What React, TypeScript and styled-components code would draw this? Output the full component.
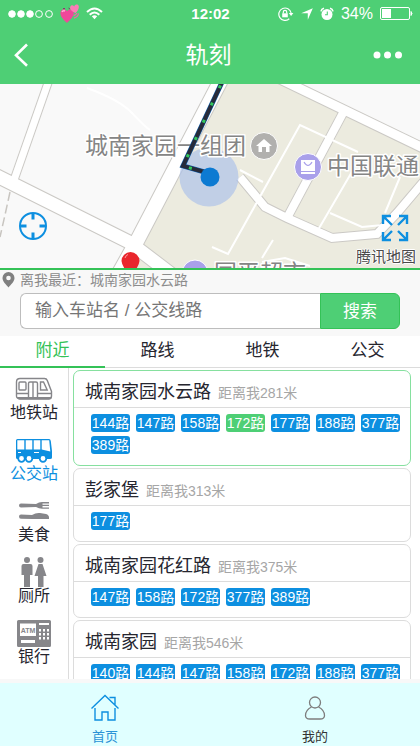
import React from "react";
import styled, { createGlobalStyle } from "styled-components";

const green = "#4ecf75";
const greenDeep = "#34c257";
const blue = "#0d8fe0";
const ink = "#26262f";
const line = "#dcdcdc";

const GlobalStyle = createGlobalStyle`
  * { box-sizing: border-box; }
  body { margin: 0; background: #fff; }
  body, button, input {
    font-family: "Liberation Sans", "Noto Sans CJK SC", sans-serif;
    color: ${ink};
  }
  button { border: 0; padding: 0; background: none; cursor: pointer; }
  a { color: inherit; text-decoration: none; }
  h1, h2, p, ul { margin: 0; padding: 0; font-weight: 400; }
  ul { list-style: none; }
  svg { display: block; flex: none; }
`;

const Shell = styled.div`
  display: flex;
  flex-direction: column;
  height: 100vh;
  overflow: hidden;
`;

const Top = styled.header`
  background: ${green};
  color: #fff;
`;

const StatusBar = styled.div`
  display: grid;
  grid-template-columns: 1fr auto 1fr;
  align-items: center;
  height: 27px;
  padding: 0 7px 0 8px;
`;

const StatusGroup = styled.div<{ $end?: boolean }>`
  display: flex;
  align-items: center;
  justify-content: ${(p) => (p.$end ? "flex-end" : "flex-start")};
  gap: ${(p) => (p.$end ? 7 : 6)}px;
  font-size: 16px;
`;

const Clock = styled.time`
  font-size: 15px;
  font-weight: 700;
`;

const TitleBar = styled.div`
  display: grid;
  grid-template-columns: 1fr auto 1fr;
  align-items: center;
  height: 57px;
  padding: 0 17px 2px 14px;
`;

const Title = styled.h1`
  font-size: 23px;
  line-height: 28px;
`;

const BarButton = styled.button<{ $end?: boolean }>`
  justify-self: ${(p) => (p.$end ? "end" : "start")};
`;

const MapPanel = styled.section`
  position: relative;
  flex: none;
  height: 186px;
  border-bottom: 2px solid ${greenDeep};
  overflow: hidden;
`;

const MapDrawing = styled.svg`
  width: 100%;
  height: 100%;
  font-size: 23px;
`;

const MapButton = styled.button<{ $right?: boolean }>`
  position: absolute;
  ${(p) => (p.$right ? "right: 11px; bottom: 26px;" : "left: 18px; bottom: 27px;")}
`;

const MapCredit = styled.span`
  position: absolute;
  right: 4px;
  bottom: 1px;
  font-size: 15px;
  line-height: 20px;
  color: #4a4a4a;
  text-shadow: 1px 0 #fff, -1px 0 #fff, 0 1px #fff, 0 -1px #fff;
`;

const SearchPanel = styled.section`
  flex: none;
  padding: 0 20px 7px;
  background: #f8f8f8;
`;

const Nearest = styled.p`
  display: flex;
  align-items: center;
  gap: 5px;
  height: 23px;
  margin-left: -18px;
  padding-bottom: 3px;
  font-size: 14px;
  line-height: 20px;
  color: #8c8c8c;
`;

const SearchForm = styled.form`
  display: flex;
  height: 36px;
`;

const SearchInput = styled.input`
  flex: 1;
  min-width: 0;
  padding: 0 14px;
  border: 1px solid #bdbdbd;
  border-right: 0;
  border-radius: 6px 0 0 6px;
  background: #fff;
  font-size: 17px;
  outline: none;
  &::placeholder { color: #757575; opacity: 1; }
`;

const SearchButton = styled.button`
  width: 80px;
  padding-bottom: 3px;
  border: 1px solid ${greenDeep};
  border-radius: 0 6px 6px 0;
  background: ${green};
  color: #fff;
  font-size: 17px;
`;

const Tabs = styled.nav`
  display: flex;
  flex: none;
  height: 32px;
  border-bottom: 1px solid ${line};
  background: #fff;
`;

const Tab = styled.button<{ $active?: boolean }>`
  flex: 1;
  height: 32px;
  font-size: 17px;
  line-height: 28px;
  color: ${(p) => (p.$active ? greenDeep : ink)};
  border-bottom: 2px solid ${(p) => (p.$active ? greenDeep : "transparent")};
`;

const Content = styled.main`
  display: flex;
  flex: 1;
  min-height: 0;
  border-bottom: 4px solid #f8f8f8;
`;

const Categories = styled.nav`
  flex: none;
  width: 69px;
  padding-top: 3px;
  border-right: 1px solid ${line};
  overflow: hidden;
`;

const Category = styled.button<{ $active?: boolean }>`
  display: flex;
  flex-direction: column;
  align-items: center;
  width: 100%;
  height: 61px;
  padding-top: 4px;
  color: ${(p) => (p.$active ? blue : "#86868a")};
`;

const CategoryIcon = styled.span`
  display: flex;
  align-items: center;
  height: 28px;
`;

const CategoryLabel = styled.span<{ $active?: boolean }>`
  font-size: 16px;
  line-height: 20px;
  color: ${(p) => (p.$active ? blue : ink)};
`;

const StationList = styled.ul`
  display: flex;
  flex: 1;
  flex-direction: column;
  gap: 2px;
  min-width: 0;
  padding: 2px 9px 0 4px;
  overflow: hidden;
`;

const Card = styled.li<{ $selected?: boolean }>`
  flex: none;
  border: 1px solid ${(p) => (p.$selected ? "#86e09f" : line)};
  border-radius: 7px;
  background: #fff;
`;

const CardHead = styled.div`
  display: flex;
  align-items: baseline;
  gap: 7px;
  height: 37px;
  padding: 0 11px;
  border-bottom: 1px solid ${line};
  line-height: 42px;
`;

const StationName = styled.h2`
  font-size: 18px;
  line-height: inherit;
`;

const Distance = styled.span`
  font-size: 14px;
  color: #a6a6a6;
`;

const Lines = styled.div`
  display: flex;
  flex-wrap: wrap;
  gap: 4px 6px;
  padding: 6px 8px 11px 17px;
`;

const LineChip = styled.button<{ $active?: boolean }>`
  display: flex;
  justify-content: center;
  flex: 0 0 39px;
  height: 18px;
  border-radius: 3px;
  background: ${(p) => (p.$active ? green : blue)};
  color: #fff;
  font-size: 14px;
  line-height: 18px;
  white-space: nowrap;
`;

const BottomNav = styled.nav`
  display: flex;
  flex: none;
  height: 63px;
  background: #e0ffff;
`;

const BottomLink = styled.a<{ $active?: boolean }>`
  display: flex;
  flex: 1;
  flex-direction: column;
  align-items: center;
  gap: 7px;
  padding-top: 11px;
  font-size: 13px;
  line-height: 18px;
  color: ${(p) => (p.$active ? "#2b93d6" : "#333")};
`;

const SignalIcon = () => (
  <svg width="46" height="10" viewBox="0 0 46 10" fill="#fff" stroke="#fff">
    {[4, 13, 22].map((x) => <circle key={x} cx={x} cy="5" r="3.3" />)}
    {[31, 41].map((x) => <circle key={x} cx={x} cy="5" r="3.4" fill="none" />)}
  </svg>
);

const HeartsIcon = () => (
  <svg width="20" height="20" viewBox="0 0 20 20">
    <path d="M7 19C4 16 0 13 .5 8.500C1 5 4.500 4 7 7C9.500 4 14 5.500 13.800 9C13.500 13 10 16 7 19Z" fill="#f0479a" />
    <path d="M2 8Q3 6 5 7" stroke="#ffb3d7" strokeWidth="1.500" fill="none" />
    <path d="M15.500 9C12 8 9.500 5.500 10.200 3C11 .8 13 1 14.200 2.400C15 .2 18.300-.2 18.800 2.200C19.200 4.500 17.500 7 15.500 9Z" fill="#fb7db6" />
    <path d="M14 14Q18 13 18.500 9.500M13.500 11.500Q16 11 17 9" stroke="#f264aa" strokeWidth="1.300" fill="none" />
    <path d="M3 4.500h2M8.500 4l1.500 1" stroke="#7d4466" />
  </svg>
);

const WifiIcon = () => (
  <svg width="17" height="13" viewBox="0 0 17 13" fill="none" stroke="#fff" strokeWidth="2">
    <path d="M1 5Q8.500-2 16 5M3.700 7.700Q8.500 3.300 13.300 7.700" />
    <path d="M5.800 9.300Q8.500 7.400 11.200 9.300L8.500 12.200Z" fill="#fff" stroke="none" />
  </svg>
);

const RotationLockIcon = () => (
  <svg width="16" height="14" viewBox="0 0 16 14" fill="none" stroke="#fff" strokeWidth="1.200">
    <path d="M11.300 11.700A6.200 6.200 0 1 1 13.100 6" />
    <path d="M10.800 6h4.600l-2.300 3z" fill="#fff" stroke="none" />
    <path d="M4.200 6.300h5.600v4H4.200z" fill="#fff" stroke="none" />
    <path d="M5.300 6.500V5a1.700 1.700 0 0 1 3.400 0v1.500" />
  </svg>
);

const LocationArrow = () => (
  <svg width="12" height="12" viewBox="0 0 12 12" fill="#fff">
    <path d="M11.800.2L6.800 11.800V5.200H.2Z" />
  </svg>
);

const AlarmIcon = () => (
  <svg width="14" height="14" viewBox="0 0 14 14">
    <circle cx="7" cy="7.500" r="5.500" fill="#fff" />
    <path d="M1 4.300Q1.500 1.800 4 1.200M13 4.300Q12.500 1.800 10 1.200" fill="none" stroke="#fff" strokeWidth="1.600" />
    <path d="M7.300 4.500v3.300H5" fill="none" stroke={green} strokeWidth="1.100" />
  </svg>
);

const BatteryIcon = () => (
  <svg width="33" height="13" viewBox="0 0 33 13">
    <rect x=".5" y=".5" width="29" height="12" rx="1.500" fill="none" stroke="#fff" />
    <rect x="2" y="2" width="9" height="9" fill="#fff" />
    <path d="M31 4.500q2 2 0 4z" fill="#fff" stroke="#fff" />
  </svg>
);

const BackIcon = () => (
  <svg width="15" height="24" viewBox="0 0 15 24" fill="none" stroke="#fff" strokeWidth="2.600">
    <path d="M13 1.500L2 12.200L13 22.800" />
  </svg>
);

const MoreIcon = () => (
  <svg width="30" height="8" viewBox="0 0 30 8" fill="#fff">
    {[4, 14.5, 25.500].map((x) => <circle key={x} cx={x} cy="4" r="3.500" />)}
  </svg>
);

const LocateIcon = () => (
  <svg width="30" height="30" viewBox="0 0 30 30" fill="none" stroke={blue} strokeWidth="2">
    <circle cx="15" cy="15" r="13" />
    <path d="M15 2v6.500M15 21.500V28M2 15h6.500M21.500 15H28" strokeWidth="3" />
  </svg>
);

const ExpandIcon = () => (
  <svg width="28" height="28" viewBox="0 0 28 28" fill="none" stroke={blue} strokeWidth="2.400">
    <path d="M2 10V2h8M2 2l9 9M18 2h8v8M26 2l-9 9M2 18v8h8M2 26l9-9M26 18v8h-8M26 26l-9-9" />
  </svg>
);

const PinIcon = () => (
  <svg width="13" height="16" viewBox="0 0 13 16" fill="#808080">
    <path fillRule="evenodd" d="M6.500 0a6 6 0 0 1 6 6c0 3.500-3.500 6.500-6 9.500C4 12.500.5 9.500.5 6a6 6 0 0 1 6-6zm0 3.700a2.300 2.300 0 1 0 0 4.600a2.300 2.300 0 0 0 0-4.600z" />
  </svg>
);

const MetroIcon = () => (
  <svg width="38" height="24" viewBox="0 0 38 24" fill="none" stroke="currentColor" strokeWidth="1.400">
    <path d="M5 1.500H29.500Q31.500 1.500 32.300 3.500L36.500 14.500V19Q36.500 21.500 34 21.500H4Q1.500 21.500 1.500 19V5Q1.500 1.500 5 1.500Z" />
    <path d="M2 20h34.500v1.500q-1 1.300-3 1.300H5q-3 0-3-2.800z" fill="currentColor" stroke="none" />
    <rect x="4" y="5" width="7" height="8" rx="1" />
    <path d="M13.500 20V6.500q0-1.500 1.500-1.500h6q1.500 0 1.500 1.500V20M18 5v15" />
    <path d="M25.500 5h3l3.700 8h-6.700zM2 16.500h11.500M22.500 16.500h14" />
  </svg>
);

const BusIcon = () => (
  <svg width="38" height="25" viewBox="0 0 38 25">
    <path fillRule="evenodd" fill="currentColor" d="M2.500 1H34Q35.500 1 35.800 3L37 13V19.500Q37 21 35 21H2.500Q1 21 1 19.500V2.500Q1 1 2.500 1ZM2.300 2.300V11.500H9.300V2.300ZM10.700 2.300V11.500H17.300V2.300ZM18.700 2.300V11.500H25.300V2.300ZM26.700 2.300V11.500L35.300 13.500L34.200 2.300Z" />
    {[6.500, 14, 28].map((x) => (
      <circle key={x} cx={x} cy="20.500" r="3.300" fill="#fff" stroke="currentColor" strokeWidth="1.800" />
    ))}
    <path d="M19 14.500h5M3 14.500h3" stroke="#fff" />
  </svg>
);

const FoodIcon = () => (
  <svg width="32" height="20" viewBox="0 0 32 20" fill="currentColor">
    <path d="M1 4.500Q1 2.500 3 2.500L18 3Q21 1 24 1H31V2.400H24.500V3.700H31V5.100H24.500V6.400H31V7.800H24Q21 7.800 18 6L3 6.500Q1 6.500 1 4.500Z" />
    <path d="M1 15.500Q1 13.500 3 13.500L14 14Q18 11.500 22 12L28 13Q31 14 31 16.500V18H14.500L3 17.700Q1 17.700 1 15.500Z" />
  </svg>
);

const RestroomIcon = () => (
  <svg width="26" height="30" viewBox="0 0 26 30" fill="currentColor">
    <circle cx="6" cy="3" r="3" />
    <path d="M2.500 7h7Q11.500 7 11.500 9v9H9v12H3V18H.5V9q0-2 2-2z" />
    <circle cx="19.500" cy="3" r="3" />
    <path d="M17.500 7h4L25.500 19H22.500V30H17V19H13.500z" />
  </svg>
);

const AtmIcon = () => (
  <svg width="34" height="27" viewBox="0 0 34 27">
    <path fill="currentColor" fillRule="evenodd" d="M1.500 0H32.500Q34 0 34 1.500V25.500Q34 27 32.500 27H1.500Q0 27 0 25.500V1.500Q0 0 1.500 0ZM3 3.500V16H19V3.500ZM22 3V5H32V3ZM4 20V23H18V20Z" />
    <g fill="#fff">
      {[9, 13, 17].map((y) => [22, 26, 30].map((x) => <rect key={`${x}-${y}`} x={x} y={y} width="2" height="2.500" />))}
    </g>
    <text x="11" y="12.500" textAnchor="middle" fontSize="7" fontWeight="700" fill="currentColor">ATM</text>
  </svg>
);

const HomeIcon = () => (
  <svg width="28" height="27" viewBox="0 0 28 27" fill="none" stroke={blue} strokeWidth="1.400">
    <path d="M.5 14.500L14 1.500L27.500 14.500M18.500 3.500H24V11M4 14V26H11V18H17V26H24V14" />
  </svg>
);

const UserIcon = () => (
  <svg width="22" height="27" viewBox="0 0 22 27" fill="none" stroke="#7d7d7d" strokeWidth="1.300">
    <circle cx="11" cy="8.500" r="5.500" />
    <path d="M7.500 13Q1.500 16 1.500 21.500Q1.500 25 6 25H16Q20.500 25 20.500 21.500Q20.500 16 14.500 13" />
  </svg>
);

const roads: { d: string; w: number }[] = [
  { d: "M49 80L14 180", w: 7 },
  { d: "M-5 175L129 242L175 277", w: 13 },
  { d: "M221 80L137 241L118 275", w: 14 },
  { d: "M280 79L425 149", w: 9 },
  { d: "M343 113L287 218", w: 8 },
  { d: "M240 177L265 207L287 218L332 238L377 234L397 213L425 180", w: 8 },
];

const CityMap = () => (
  <MapDrawing viewBox="0 84 420 184" preserveAspectRatio="xMidYMid slice" role="img" aria-label="地图">
    <rect x="-400" y="0" width="1300" height="400" fill="#f9f9f9" />
    <path d="M219 80H282L425 149V275H165L137 243Z" fill="#ecebdf" />
    <path d="M113 275L127 248L170 275Z" fill="#ecebdf" />
    <path d="M87 88Q120 100 132 113T150 130" fill="none" stroke="#fff" strokeWidth="2" />
    {roads.map((r) => <path key={r.d} d={r.d} fill="none" stroke="#cbc9c5" strokeWidth={r.w + 2} />)}
    {roads.map((r) => <path key={r.d} d={r.d} fill="none" stroke="#fff" strokeWidth={r.w} />)}
    <path d="M10 192L5 215L0 237" fill="none" stroke="#c8c5c0" strokeWidth="1.500" strokeDasharray="9 4" />
    <path
      d="M358 152L300 125L228 254L212 247M240 170L263 182M353 170L318 230M330 213L362 227L383 225M400 177L385 213M273 240L262 258M262 262L285 258L310 266"
      fill="none" stroke="#fff" strokeWidth="2"
    />
    <circle cx="209" cy="177" r="29.500" fill="#abc0ea" fillOpacity=".65" />
    <g fill="#858585" stroke="#fff" strokeWidth="3" paintOrder="stroke" strokeLinejoin="round">
      <text x="85" y="154">城南家园一组团</text>
      <text x="327" y="174">中国联通</text>
      <text x="214" y="281">国平超市</text>
    </g>
    <path d="M223 80L183 166L208 173" fill="none" stroke="#1767b5" strokeWidth="5" />
    <path d="M223 80L183 166L208 173" fill="none" stroke="#272b3a" strokeWidth="4" />
    <path d="M223 80L183 166L208 173" fill="none" stroke="#32c85f" strokeWidth="3" strokeDasharray="3 16" strokeDashoffset="-6" />
    <circle cx="210" cy="177" r="9.500" fill="#0c7ad2" />
    <circle cx="264" cy="146" r="13.500" fill="#b1b0ae" stroke="#fff" />
    <path d="M256 146L264 139L272 146H269.500V152H266V147H262V152H258.500V146Z" fill="#fff" />
    <circle cx="308" cy="167" r="13.500" fill="#a9a0ea" stroke="#fff" />
    <rect x="301" y="160" width="14" height="14" fill="#fff" />
    <path d="M304 162Q308 169 312 162M301 171.500h14" fill="none" stroke="#a9a0ea" strokeWidth="1.200" />
    <circle cx="195" cy="273" r="13" fill="#a9a0ea" stroke="#fff" />
    <path d="M121.500 261A9 9 0 0 1 139.500 261Q139 267 130.500 276Q122 267 121.500 261Z" fill="#e9262d" />
    <path d="M125 258Q126 255 128 254.500" fill="none" stroke="#ff9b9e" />
  </MapDrawing>
);

const categories = [
  { label: "地铁站", Icon: MetroIcon },
  { label: "公交站", Icon: BusIcon },
  { label: "美食", Icon: FoodIcon },
  { label: "厕所", Icon: RestroomIcon },
  { label: "银行", Icon: AtmIcon },
];

const stations = [
  { name: "城南家园水云路", meters: 281, lines: [144, 147, 158, 172, 177, 188, 377, 389], picked: 172 },
  { name: "彭家堡", meters: 313, lines: [177] },
  { name: "城南家园花红路", meters: 375, lines: [147, 158, 172, 377, 389] },
  { name: "城南家园", meters: 546, lines: [140, 144, 147, 158, 172, 188, 377] },
];

export default function App() {
  return (
    <Shell>
      <GlobalStyle />
      <Top>
        <StatusBar>
          <StatusGroup><SignalIcon /><HeartsIcon /><WifiIcon /></StatusGroup>
          <Clock>12:02</Clock>
          <StatusGroup $end>
            <RotationLockIcon /><LocationArrow /><AlarmIcon /><span>34%</span><BatteryIcon />
          </StatusGroup>
        </StatusBar>
        <TitleBar>
          <BarButton aria-label="返回"><BackIcon /></BarButton>
          <Title>轨刻</Title>
          <BarButton $end aria-label="更多"><MoreIcon /></BarButton>
        </TitleBar>
      </Top>
      <MapPanel>
        <CityMap />
        <MapButton aria-label="定位"><LocateIcon /></MapButton>
        <MapButton $right aria-label="全屏"><ExpandIcon /></MapButton>
        <MapCredit>腾讯地图</MapCredit>
      </MapPanel>
      <SearchPanel>
        <Nearest><PinIcon />离我最近：城南家园水云路</Nearest>
        <SearchForm onSubmit={(e) => e.preventDefault()}>
          <SearchInput type="text" aria-label="输入车站名 / 公交线路" placeholder="输入车站名 / 公交线路" />
          <SearchButton type="submit">搜索</SearchButton>
        </SearchForm>
      </SearchPanel>
      <Tabs>
        {["附近", "路线", "地铁", "公交"].map((t, i) => <Tab key={t} $active={i === 0}>{t}</Tab>)}
      </Tabs>
      <Content>
        <Categories>
          {categories.map(({ label, Icon }, i) => (
            <Category key={label} $active={i === 1}>
              <CategoryIcon><Icon /></CategoryIcon>
              <CategoryLabel $active={i === 1}>{label}</CategoryLabel>
            </Category>
          ))}
        </Categories>
        <StationList>
          {stations.map((s, i) => (
            <Card key={s.name} $selected={i === 0}>
              <CardHead>
                <StationName>{s.name}</StationName>
                <Distance>距离我{s.meters}米</Distance>
              </CardHead>
              <Lines>
                {s.lines.map((n) => <LineChip key={n} $active={n === s.picked}>{n}路</LineChip>)}
              </Lines>
            </Card>
          ))}
        </StationList>
      </Content>
      <BottomNav>
        <BottomLink href="#home" $active><HomeIcon />首页</BottomLink>
        <BottomLink href="#me"><UserIcon />我的</BottomLink>
      </BottomNav>
    </Shell>
  );
}
